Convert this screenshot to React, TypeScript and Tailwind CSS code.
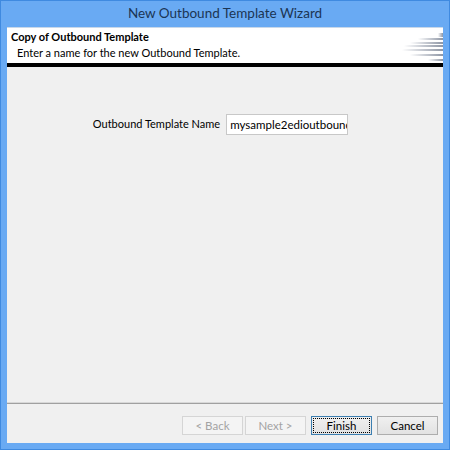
const FONT = { fontFamily: 'Lato, "Noto Sans", sans-serif' }

function HeaderArt() {
  const lines = [
    { y: 5, x: 38, w: 4 },
    { y: 10, x: 18, w: 2 },
    { y: 14, x: 10, w: 2 },
    { y: 17, x: 4, w: 2 },
    { y: 21, x: 2, w: 2 },
    { y: 26, x: 10, w: 2 },
    { y: 31, x: 28, w: 2 },
  ]
  return (
    <svg width="43" height="35" viewBox="0 0 43 35" className="shrink-0">
      <defs>
        <linearGradient id="fade" x1="0" x2="1" y1="0" y2="0">
          <stop offset="0" stopColor="#ffffff" />
          <stop offset="0.5" stopColor="#c4c8d0" />
          <stop offset="1" stopColor="#8e96a4" />
        </linearGradient>
      </defs>
      {lines.map((l, i) => (
        <rect key={i} x={l.x} y={l.y} width={43 - l.x} height={l.w} fill="url(#fade)" />
      ))}
    </svg>
  )
}

function Btn({ label, disabled, focused }: { label: string; disabled?: boolean; focused?: boolean }) {
  if (disabled) {
    return (
      <div className="w-[61px] h-[19px] border border-[#d5d5d5] bg-[#f4f4f4] text-[#a3a3a3] text-[11.5px] flex items-center justify-center">
        {label}
      </div>
    )
  }
  return (
    <div
      className={`w-[61px] h-[19px] border ${focused ? 'border-[#3c7fb1]' : 'border-[#adadad]'} bg-gradient-to-b from-[#f0f0f0] to-[#e2e2e2] text-black text-[11.5px] flex items-center justify-center p-[1px]`}
    >
      <div className={`w-full h-full flex items-center justify-center ${focused ? 'border border-dotted border-black' : ''}`}>
        {label}
      </div>
    </div>
  )
}

export default function App() {
  return (
    <div className="w-[450px] h-[450px] bg-[#69aaf3] border border-[#3f8ae0] flex flex-col" style={FONT}>
      <div className="h-[26px] flex items-center justify-center text-[13.5px] text-[#1b3553] pb-[1px]">
        New Outbound Template Wizard
      </div>
      <div className="flex-1 mx-[6px] mb-[6px] bg-[#f0f0f0] flex flex-col border-t border-[#c8d8ea]">
        <div className="h-[35px] bg-white flex justify-between">
          <div className="pl-[4px] pt-[1px] leading-none">
            <div className="text-[11px] font-bold text-black leading-[16px]">Copy of Outbound Template</div>
            <div className="text-[11px] text-black pl-[6px] leading-[16px]">Enter a name for the new Outbound Template.</div>
          </div>
          <HeaderArt />
        </div>
        <div className="h-[4px] bg-black" />
        <div className="flex-1 flex justify-center items-start pt-[47px] pr-[9px]">
          <div className="flex items-center gap-[6px]">
            <span className="text-[11px] text-black">Outbound Template Name</span>
            <div className="w-[122px] h-[21px] bg-white border border-[#c8c8c8] text-[11.5px] text-black overflow-hidden whitespace-nowrap px-[3px] leading-[19px]">
              mysample2edioutbound
            </div>
          </div>
        </div>
        <div className="h-[1px] bg-[#d8d8d8]" />
        <div className="h-[1px] bg-[#a0a0a0]" />
        <div className="h-[39px] flex justify-end items-start pt-[12px] pr-[5px]">
          <div className="flex gap-[2px]">
            <Btn label="< Back" disabled />
            <Btn label="Next >" disabled />
          </div>
          <div className="flex gap-[5px] ml-[5px]">
            <Btn label="Finish" focused />
            <Btn label="Cancel" />
          </div>
        </div>
      </div>
    </div>
  )
}
